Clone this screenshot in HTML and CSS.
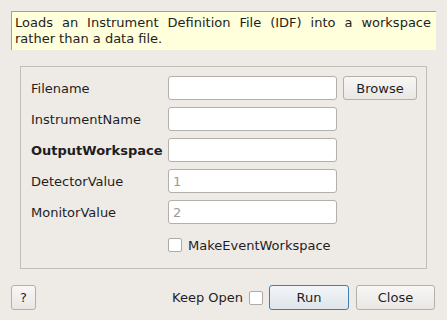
FILE: index.html
```html
<!DOCTYPE html>
<html lang="en">
<head>
<meta charset="UTF-8">
<title>LoadEmptyInstrument</title>
<link rel="stylesheet" href="styles.css">
</head>
<body>
<div class="dialog">
    <div class="desc">Loads an Instrument Definition File (IDF) into a workspace rather than a data file.</div>

    <div class="group">
        <label class="lbl">Filename</label>
        <input class="field" type="text">
        <button class="btn">Browse</button>

        <label class="lbl">InstrumentName</label>
        <input class="field" type="text">
        <span></span>

        <label class="lbl bold">OutputWorkspace</label>
        <input class="field" type="text">
        <span></span>

        <label class="lbl">DetectorValue</label>
        <input class="field" type="text" placeholder="1">
        <span></span>

        <label class="lbl">MonitorValue</label>
        <input class="field" type="text" placeholder="2">
        <span></span>

        <span></span>
        <label class="check-row"><span class="box"></span>MakeEventWorkspace</label>
    </div>

    <div class="footer">
        <button class="btn help">?</button>
        <div class="spacer"></div>
        <label class="keep">Keep Open <span class="box"></span></label>
        <button class="btn run">Run</button>
        <button class="btn close">Close</button>
    </div>
</div>
</body>
</html>
```

FILE: styles.css
```css
/* dialog styles */
html, body {
    margin: 0;
    padding: 0;
    background: #eeebe7;
}

body {
    font-family: "DejaVu Sans", sans-serif;
    font-size: 13px;
    color: #1e1e1e;
}

.dialog {
    width: 447px;
    height: 320px;
    display: flex;
    flex-direction: column;
}

.desc {
    margin: 11px 11px 0 11px;
    height: 33px;
    padding: 3px 5px 2px 3px;
    background: #ffffdc;
    border-top: 1px solid #a09f9b;
    border-left: 1px solid #a09f9b;
    line-height: 16px;
    text-align: justify;
}

.group {
    margin: 16px 0 0 20px;
    width: 387px;
    height: 182px;
    padding: 9px 9px 10px 9px;
    border: 1px solid #c2bfba;
    display: grid;
    grid-template-columns: 138px 169px 80px;
    grid-auto-rows: 24px;
    row-gap: 7px;
    column-gap: 0;
}

.group .btn {
    margin-left: 6px;
}

.lbl {
    display: flex;
    align-items: center;
    padding-left: 1px;
}

.bold {
    font-weight: bold;
}

.field {
    box-sizing: border-box;
    height: 24px;
    margin: 0;
    padding: 0 4px;
    border: 1px solid #b3b0ab;
    border-radius: 3px;
    background: #fff;
    font-family: inherit;
    font-size: 13px;
    outline: none;
}

.field::placeholder {
    color: #9a9a9a;
}

.btn {
    box-sizing: border-box;
    height: 24px;
    margin: 0;
    padding: 0;
    border: 1px solid #b3afaa;
    border-radius: 3px;
    background: linear-gradient(#f8f7f6, #e9e7e4);
    font-family: inherit;
    font-size: 13px;
    color: #1e1e1e;
}

.check-row {
    grid-column: 2 / 4;
    margin-top: 4px;
    display: flex;
    align-items: center;
    gap: 6px;
}

.box {
    display: inline-block;
    box-sizing: border-box;
    width: 14px;
    height: 14px;
    border: 1px solid #aeaba6;
    border-radius: 2px;
    background: #fff;
}

.footer {
    margin-top: 16px;
    padding: 0 12px 0 11px;
    height: 25px;
    display: flex;
    align-items: center;
}

.footer .btn {
    height: 25px;
}

.help {
    width: 25px;
}

.spacer {
    flex: 1;
}

.keep {
    display: flex;
    align-items: center;
    gap: 6px;
    margin-right: 6px;
}

.run {
    width: 80px;
    border-color: #3f7fb0;
    background: linear-gradient(#f2f5f8, #dfe5ea);
    margin-right: 7px;
}

.close {
    width: 79px;
}
```
